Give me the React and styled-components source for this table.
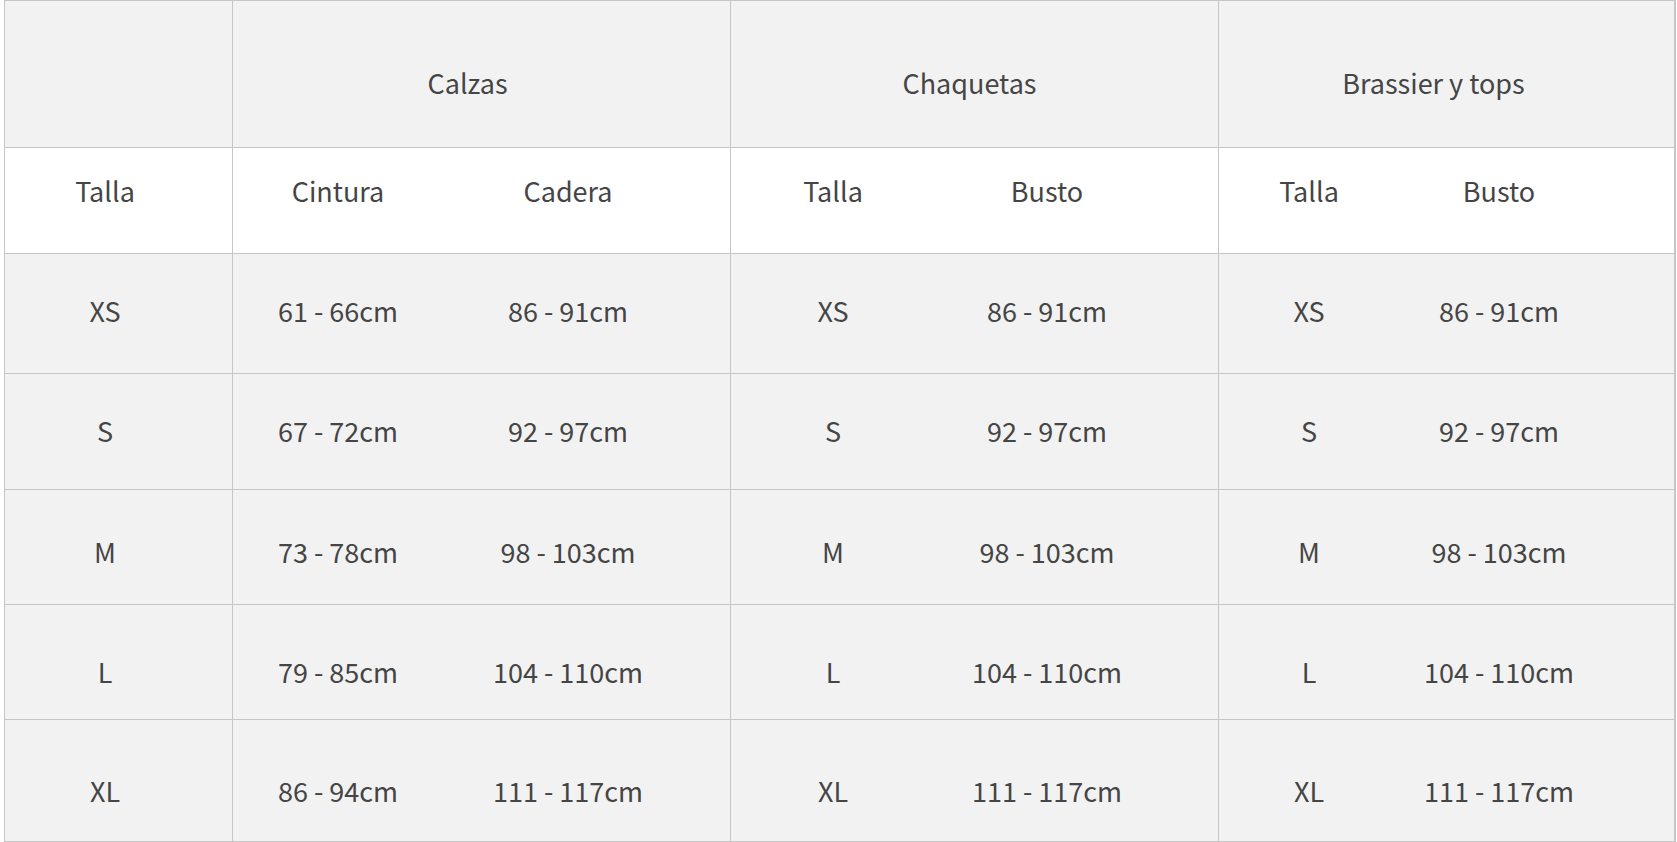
import React from "react";
import styled, { createGlobalStyle } from "styled-components";

const GlobalStyle = createGlobalStyle`
  body {
    margin: 0;
    background: #ffffff;
    font-family: "Noto Sans CJK SC", "Lato", sans-serif;
  }
`;

const Page = styled.div`
  padding-left: 4px;
  width: 1672px;
`;

const Table = styled.div`
  display: grid;
  grid-template-columns: ${(p) => p.$columns};
  grid-template-rows: ${(p) => p.$rows};
  border: 1px solid #c6c6c6;
  border-bottom: none;
  color: #454545;
  font-size: 27px;
  font-weight: 400;
  line-height: 34px;
`;

const Cell = styled.div`
  box-sizing: border-box;
  background: ${(p) => p.$bg};
  border-bottom: 1px solid #c6c6c6;
  border-right: ${(p) => (p.$end ? "1px solid #c6c6c6" : "none")};
  grid-column: ${(p) => (p.$span ? `span ${p.$span}` : "auto")};
  padding-top: ${(p) => p.$top}px;
  padding-right: ${(p) => p.$pr || 0}px;
  text-align: center;
  white-space: nowrap;
`;

const sizes = ["XS", "S", "M", "L", "XL"];
const busto = ["86 - 91cm", "92 - 97cm", "98 - 103cm", "104 - 110cm", "111 - 117cm"];

const groups = [
  {
    title: "",
    pad: 0,
    spacer: 28,
    cols: [{ label: "Talla", w: 200, values: sizes }],
  },
  {
    title: "Calzas",
    pad: 28,
    spacer: 38,
    cols: [
      { label: "Cintura", w: 210, values: ["61 - 66cm", "67 - 72cm", "73 - 78cm", "79 - 85cm", "86 - 94cm"] },
      { label: "Cadera", w: 250, values: busto },
    ],
  },
  {
    title: "Chaquetas",
    pad: 10,
    spacer: 60,
    cols: [
      { label: "Talla", w: 204, values: sizes },
      { label: "Busto", w: 224, values: busto },
    ],
  },
  {
    title: "Brassier y tops",
    pad: 26,
    spacer: 76,
    cols: [
      { label: "Talla", w: 180, values: sizes },
      { label: "Busto", w: 200, values: busto },
    ],
  },
];

const rowHeights = [147, 106, 120, 116, 115, 115, 122];
const bodyTops = [40, 40, 45, 50, 54];

const columns = groups
  .map((g) => [...g.cols.map((c) => `${c.w}px`), `${g.spacer}px`].join(" "))
  .join(" ");

export default function App() {
  return (
    <>
      <GlobalStyle />
      <Page>
        <Table $columns={columns} $rows={rowHeights.map((h) => `${h}px`).join(" ")}>
          {groups.map((g, i) => (
            <Cell key={`t${i}`} $bg="#f2f2f2" $top={65} $pr={g.pad} $span={g.cols.length + 1} $end>
              {g.title}
            </Cell>
          ))}

          {groups.map((g, i) => (
            <React.Fragment key={`h${i}`}>
              {g.cols.map((c) => (
                <Cell key={c.label} $bg="#ffffff" $top={26}>
                  {c.label}
                </Cell>
              ))}
              <Cell $bg="#ffffff" $top={26} $end />
            </React.Fragment>
          ))}

          {sizes.map((s, r) =>
            groups.map((g, i) => (
              <React.Fragment key={`r${r}g${i}`}>
                {g.cols.map((c) => (
                  <Cell key={c.label} $bg="#f2f2f2" $top={bodyTops[r]}>
                    {c.values[r]}
                  </Cell>
                ))}
                <Cell $bg="#f2f2f2" $top={bodyTops[r]} $end />
              </React.Fragment>
            ))
          )}
        </Table>
      </Page>
    </>
  );
}
